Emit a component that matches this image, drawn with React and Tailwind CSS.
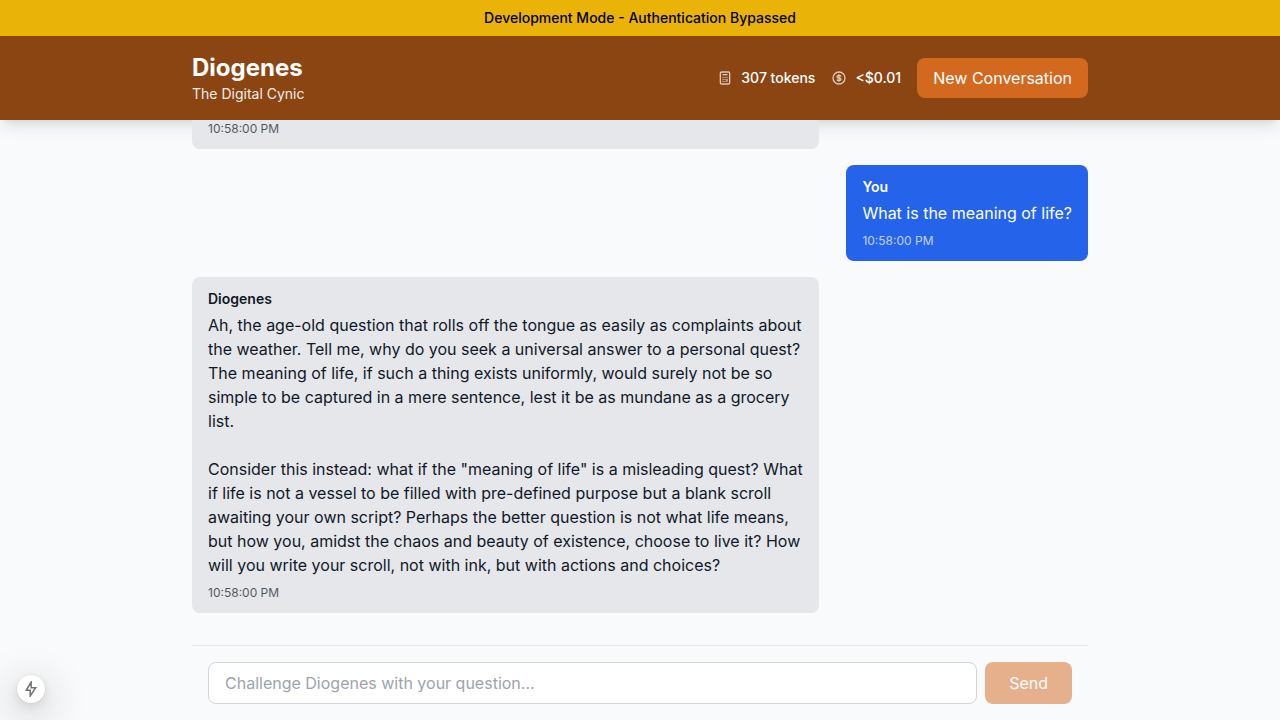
import { useState } from "react";

const messages = [
  {
    id: 1,
    role: "assistant",
    time: "10:58:00 PM",
  },
  {
    id: 2,
    author: "You",
    role: "user",
    time: "10:58:00 PM",
    text: "What is the meaning of life?",
  },
  {
    id: 3,
    author: "Diogenes",
    role: "assistant",
    time: "10:58:00 PM",
    text: `Ah, the age-old question that rolls off the tongue as easily as complaints about the weather. Tell me, why do you seek a universal answer to a personal quest? The meaning of life, if such a thing exists uniformly, would surely not be so simple to be captured in a mere sentence, lest it be as mundane as a grocery list.

Consider this instead: what if the "meaning of life" is a misleading quest? What if life is not a vessel to be filled with pre-defined purpose but a blank scroll awaiting your own script? Perhaps the better question is not what life means, but how you, amidst the chaos and beauty of existence, choose to live it? How will you write your scroll, not with ink, but with actions and choices?`,
  },
];

function StatIcon({ d }) {
  return (
    <svg
      className="size-4 opacity-70"
      viewBox="0 0 24 24"
      fill="none"
      stroke="currentColor"
      strokeWidth="2"
      strokeLinecap="round"
      strokeLinejoin="round"
      aria-hidden="true"
    >
      <path d={d} />
    </svg>
  );
}

const CALCULATOR =
  "M9 7h6m0 10v-3m-3 3h.01M9 17h.01M9 14h.01M12 14h.01M15 11h.01M12 11h.01M9 11h.01M7 21h10a2 2 0 002-2V5a2 2 0 00-2-2H7a2 2 0 00-2 2v14a2 2 0 002 2z";
const DOLLAR =
  "M12 8c-1.657 0-3 .895-3 2s1.343 2 3 2 3 .895 3 2-1.343 2-3 2m0-8c1.11 0 2.08.402 2.599 1M12 8V7m0 1v8m0 0v1m0-1c-1.11 0-2.08-.402-2.599-1M21 12a9 9 0 11-18 0 9 9 0 0118 0z";

function Header() {
  return (
    <header className="bg-[#8b4513] py-4 text-white shadow-lg">
      <div className="mx-auto flex max-w-4xl items-center justify-between">
        <div>
          <h1 className="text-2xl font-bold">Diogenes</h1>
          <p className="text-sm opacity-90">The Digital Cynic</p>
        </div>
        <div className="flex items-center gap-4">
          <div className="flex items-center gap-4 text-sm font-medium">
            <div className="flex items-center gap-2">
              <StatIcon d={CALCULATOR} />
              <span>307 tokens</span>
            </div>
            <div className="flex items-center gap-2">
              <StatIcon d={DOLLAR} />
              <span>&lt;$0.01</span>
            </div>
          </div>
          <button type="button" className="rounded-lg bg-[#d2691e] px-4 py-2">
            New Conversation
          </button>
        </div>
      </div>
    </header>
  );
}

function Message({ message }) {
  const isUser = message.role === "user";
  return (
    <div className={isUser ? "flex justify-end" : "flex justify-start"}>
      <article
        className={
          isUser
            ? "max-w-[70%] rounded-lg bg-[#2563eb] px-4 py-3 text-white"
            : "w-[70%] rounded-lg bg-[#e5e7eb] px-4 py-3 text-[#111827]"
        }
      >
        {message.author && <h2 className="mb-1 text-sm font-semibold">{message.author}</h2>}
        {message.text && <p className="whitespace-pre-wrap">{message.text}</p>}
        <time className="mt-2 block text-xs opacity-70">{message.time}</time>
      </article>
    </div>
  );
}

export default function App() {
  const [draft, setDraft] = useState("");
  return (
    <div className="flex h-screen flex-col bg-[#f9fafb] font-['Inter',sans-serif]">
      <div className="bg-[#eab308] px-4 py-2 text-center text-sm font-medium text-black">
        Development Mode - Authentication Bypassed
      </div>
      <Header />
      <main className="mx-auto flex min-h-0 w-full max-w-4xl flex-1 flex-col">
        <div className="flex min-h-0 flex-1 flex-col-reverse overflow-y-auto [scrollbar-width:none]">
          <div className="flex flex-col gap-4 pt-4 pb-8">
            {messages.map((message) => (
              <Message key={message.id} message={message} />
            ))}
          </div>
        </div>
        <form
          className="flex gap-2 border-t border-[#e5e7eb] p-4"
          onSubmit={(event) => event.preventDefault()}
        >
          <input
            type="text"
            aria-label="Your question"
            placeholder="Challenge Diogenes with your question..."
            value={draft}
            onChange={(event) => setDraft(event.target.value)}
            className="min-w-0 flex-1 rounded-lg border border-[#d1d5db] bg-white px-4 py-2 placeholder:text-[#9ca3af]"
          />
          <button
            type="submit"
            disabled={!draft}
            className="rounded-lg bg-[#d2691e] px-6 py-2 text-white disabled:opacity-50"
          >
            Send
          </button>
        </form>
      </main>
      <button
        type="button"
        aria-label="Static route"
        className="fixed bottom-[17px] left-[17px] flex size-7 items-center justify-center rounded-full bg-white text-neutral-500 shadow-[0_0_0_1px_rgba(0,0,0,0.05),0_4px_12px_rgba(0,0,0,0.1),0_11px_40px_5px_rgba(0,0,0,0.18)]"
      >
        <svg className="size-4" viewBox="0 0 16 16" fill="none" stroke="currentColor" strokeWidth="1.5" aria-hidden="true">
          <path d="M8.2 1 L3.3 9.3 H7.2 V15 L12.7 6.7 H8.2 Z" />
        </svg>
      </button>
    </div>
  );
}
